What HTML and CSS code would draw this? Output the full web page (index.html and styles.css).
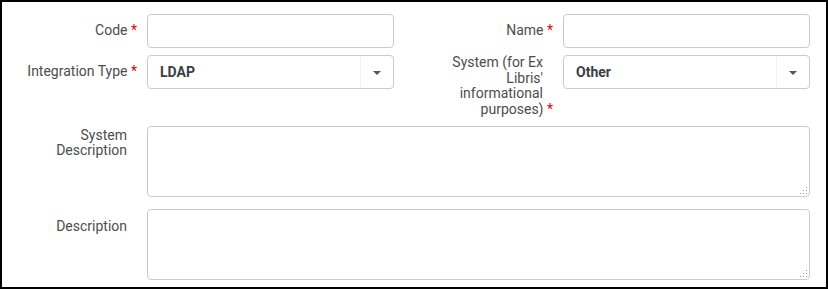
FILE: index.html
```html
<!DOCTYPE html>
<html lang="en">
  <head>
    <meta charset="UTF-8" />
    <meta name="viewport" content="width=device-width, initial-scale=1.0" />
    <title>Integration Profile</title>
    <link rel="stylesheet" href="styles.css">
  </head>
  <body>
    <main class="frame">
      <form class="form">
        <div class="pair-row row-first">
          <div class="field">
            <label class="field-label"><span class="label-text">Code <span class="req">*</span></span></label>
            <input class="control" type="text" />
          </div>
          <div class="field">
            <label class="field-label"><span class="label-text">Name <span class="req">*</span></span></label>
            <input class="control" type="text" />
          </div>
        </div>

        <div class="pair-row row-second">
          <div class="field">
            <label class="field-label"><span class="label-text">Integration Type <span class="req">*</span></span></label>
            <div class="control select">
              <span class="select-value">LDAP</span>
              <span class="select-arrow"><span class="caret"></span></span>
            </div>
          </div>
          <div class="field">
            <label class="field-label"><span class="label-text">System (for Ex Libris' informational purposes) <span class="req">*</span></span></label>
            <div class="control select">
              <span class="select-value">Other</span>
              <span class="select-arrow"><span class="caret"></span></span>
            </div>
          </div>
        </div>

        <div class="field wide row-third">
          <label class="field-label"><span class="label-text">System Description</span></label>
          <div class="area-wrap">
            <textarea class="control area"></textarea>
            <svg class="grip" width="9" height="9" viewBox="0 0 9 9">
              <rect x="7" y="1" width="1" height="1" />
              <rect x="4" y="4" width="1" height="1" />
              <rect x="7" y="4" width="1" height="1" />
              <rect x="1" y="7" width="1" height="1" />
              <rect x="4" y="7" width="1" height="1" />
              <rect x="7" y="7" width="1" height="1" />
            </svg>
          </div>
        </div>

        <div class="field wide row-fourth">
          <label class="field-label"><span class="label-text">Description</span></label>
          <div class="area-wrap">
            <textarea class="control area"></textarea>
            <svg class="grip" width="9" height="9" viewBox="0 0 9 9">
              <rect x="7" y="1" width="1" height="1" />
              <rect x="4" y="4" width="1" height="1" />
              <rect x="7" y="4" width="1" height="1" />
              <rect x="1" y="7" width="1" height="1" />
              <rect x="4" y="7" width="1" height="1" />
              <rect x="7" y="7" width="1" height="1" />
            </svg>
          </div>
        </div>
      </form>
    </main>
  </body>
</html>
```

FILE: styles.css
```css
html,
body {
  margin: 0;
  background-color: #fff;
}
body {
  font-family: Roboto, "Liberation Sans", Arial, sans-serif;
  font-size: 14px;
  color: #4d4d4d;
}

.frame {
  box-sizing: border-box;
  width: 828px;
  height: 289px;
  border: 2px solid #000;
  overflow: hidden;
}
.form {
  padding: 12px 0 0 15px;
}

.pair-row {
  display: grid;
  grid-template-columns: 377px 377px;
  column-gap: 39px;
}
.row-second {
  margin-top: 7px;
}
.row-third {
  margin-top: 9px;
}
.row-fourth {
  margin-top: 12px;
}

.field {
  display: flex;
  align-items: flex-start;
}
.field-label {
  box-sizing: border-box;
  width: 130px;
  min-height: 34px;
  padding-right: 20px;
  display: flex;
  align-items: center;
  justify-content: flex-end;
  flex-shrink: 0;
}
.label-text {
  display: block;
  width: 100%;
  text-align: right;
  line-height: 15.6px;
}
.req {
  color: #e00000;
  margin-right: -10px;
}

.control {
  box-sizing: border-box;
  width: 247px;
  height: 34px;
  margin: 0;
  border: 1px solid #cbcbcb;
  border-radius: 4px;
  background-color: #fff;
  font-family: inherit;
  font-size: 14px;
  color: #333;
  outline: none;
}

.select {
  display: flex;
  align-items: stretch;
}
.select-value {
  flex: 1;
  display: flex;
  align-items: center;
  padding-left: 12px;
  font-weight: bold;
  color: #3b3f45;
}
.select-arrow {
  width: 32px;
  border-left: 1px solid #f1f1f1;
  display: flex;
  align-items: center;
  justify-content: center;
}
.caret {
  width: 0;
  height: 0;
  margin-top: 1px;
  border-left: 4px solid transparent;
  border-right: 4px solid transparent;
  border-top: 4px solid #555;
}

.area-wrap {
  position: relative;
  width: 663px;
  height: 71px;
}
.area {
  display: block;
  width: 663px;
  height: 71px;
  resize: none;
}
.grip {
  position: absolute;
  right: 2px;
  bottom: 2px;
  fill: #9a9a9a;
}
```
